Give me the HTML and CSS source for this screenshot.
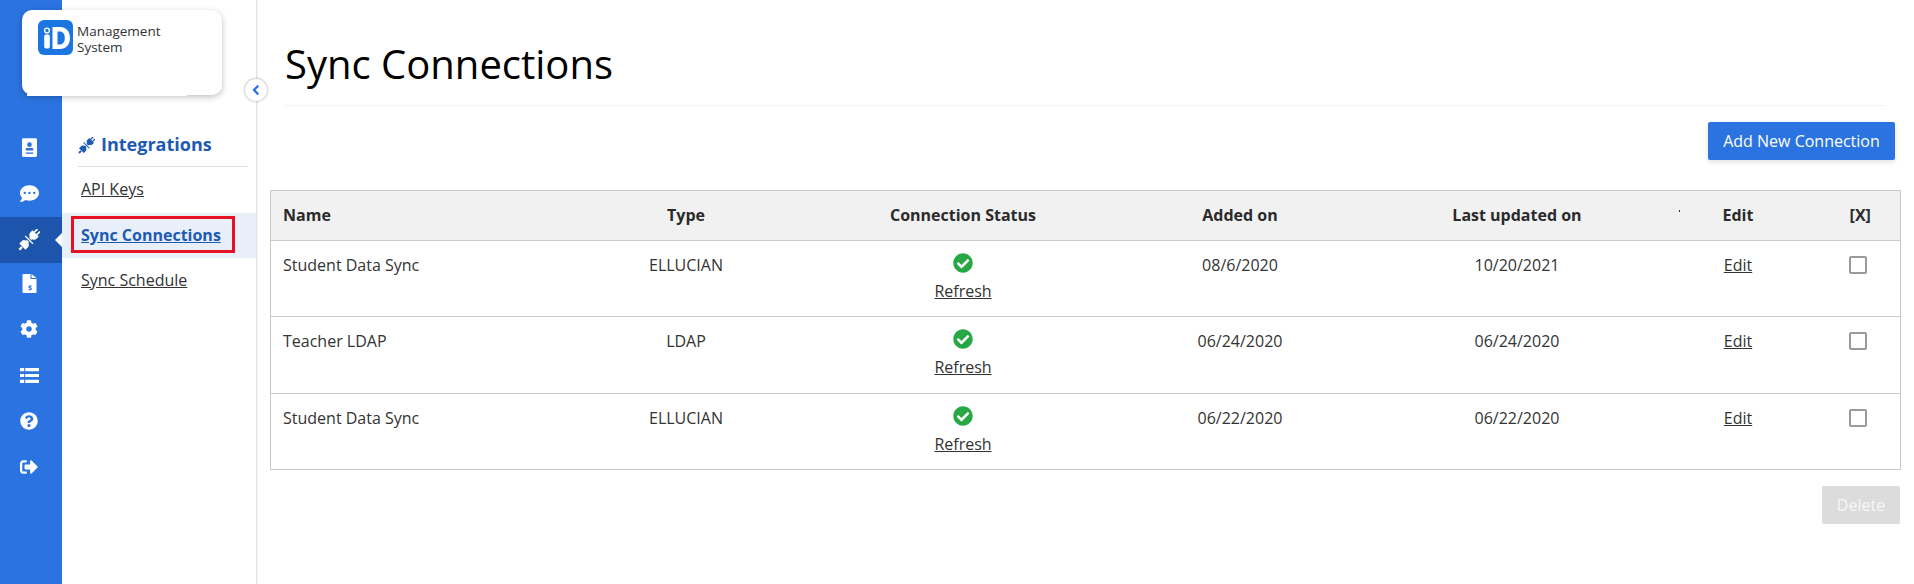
FILE: index.html
```html
<!DOCTYPE html>
<html lang="en">
<head>
<meta charset="utf-8">
<title>Sync Connections</title>
<link rel="stylesheet" href="styles.css">
</head>
<body>
<svg class="defs" width="0" height="0" aria-hidden="true">
  <symbol id="plug" viewBox="0 0 24 24">
    <g transform="rotate(45 12 12)" fill="currentColor">
      <rect x="9.200" y="-3" width="1.800" height="5"/>
      <rect x="13" y="-3" width="1.800" height="5"/>
      <path d="M7.200 1.800h9.600v3.400c0 1.900-1.100 3.200-2.900 3.600v1.400h-3.800V8.800C8.300 8.400 7.200 7.100 7.200 5.200z"/>
      <path d="M10.100 13.600h3.800V15c1.800.4 2.900 1.700 2.900 3.600v3.600H7.200v-3.600c0-1.900 1.100-3.200 2.900-3.600z"/>
      <rect x="6" y="11.200" width="12" height="1.400"/>
      <rect x="10.700" y="22.800" width="2.600" height="4.200"/>
    </g>
  </symbol>
  <symbol id="check" viewBox="0 0 512 512">
    <path fill="#28a745" d="M504 256c0 136.967-111.033 248-248 248S8 392.967 8 256 119.033 8 256 8s248 111.033 248 248zM227.314 387.314l184-184c6.248-6.248 6.248-16.379 0-22.627l-22.627-22.627c-6.248-6.249-16.379-6.249-22.628 0L216 308.118l-69.059-69.059c-6.248-6.248-16.379-6.248-22.628 0l-22.627 22.627c-6.248 6.248-6.248 16.379 0 22.627l104 104c6.249 6.249 16.379 6.249 22.628.001z"/>
  </symbol>
</svg>

<div class="app">
  <nav class="rail">
    <a class="rail-item">
      <svg class="rail-icon" viewBox="0 0 16 20"><path fill="#fff" fill-rule="evenodd" d="M1.500 0h13A1.500 1.500 0 0 1 16 1.500v17a1.500 1.500 0 0 1-1.500 1.500h-13A1.500 1.500 0 0 1 0 18.500v-17A1.500 1.500 0 0 1 1.500 0zM8 4.500a2.500 2.500 0 1 0 0 5 2.500 2.500 0 0 0 0-5zM4 11.600v1.700h8v-1.700c0-.6-.5-1-1.200-1H5.200c-.7 0-1.200.4-1.200 1z"/><rect x="4" y="15.300" width="8" height="1.400" fill="#2b73e0"/></svg>
    </a>
    <a class="rail-item item-tall">
      <svg class="rail-icon wide" viewBox="0 0 512 512"><path fill="#fff" d="M256 32C114.600 32 0 125.100 0 240c0 49.600 21.400 95 57 130.700C44.500 421.100 2.700 466 2.200 466.500c-2.200 2.300-2.800 5.700-1.500 8.700S4.800 480 8 480c66.300 0 116-31.800 140.600-51.400 32.700 12.300 69 19.400 107.400 19.400 141.400 0 256-93.100 256-208S397.400 32 256 32zM128 272c-17.700 0-32-14.300-32-32s14.300-32 32-32 32 14.300 32 32-14.300 32-32 32zm128 0c-17.700 0-32-14.300-32-32s14.300-32 32-32 32 14.300 32 32-14.300 32-32 32zm128 0c-17.700 0-32-14.300-32-32s14.300-32 32-32 32 14.300 32 32-14.300 32-32 32z"/></svg>
    </a>
    <a class="rail-item active">
      <svg class="rail-icon rail-plug"><use href="#plug"/></svg>
    </a>
    <a class="rail-item item-short">
      <svg class="rail-icon" viewBox="0 0 14 19"><path fill="#fff" d="M0 .8C0 .4.400 0 .800 0H8v5h6v13.200c0 .4-.4.800-.8.800H.8c-.4 0-.8-.4-.8-.8zM9 0l5 4H9z"/><text x="7.500" y="15.800" class="doc-dollar">$</text></svg>
    </a>
    <a class="rail-item">
      <svg class="rail-icon gear" viewBox="0 0 512 512"><path fill="#fff" d="M487.400 315.700l-42.600-24.600c4.300-23.200 4.300-47 0-70.200l42.600-24.600c4.900-2.800 7.100-8.600 5.500-14-11.100-35.600-30-67.800-54.700-94.600-3.800-4.100-10-5.100-14.800-2.300L380.800 110c-17.900-15.400-38.500-27.300-60.800-35.100V25.800c0-5.600-3.900-10.500-9.400-11.700-36.700-8.200-74.300-7.800-109.200 0-5.500 1.200-9.400 6.100-9.400 11.700V75c-22.200 7.900-42.800 19.800-60.800 35.100L88.700 85.500c-4.900-2.800-11-1.900-14.800 2.300-24.700 26.700-43.600 58.900-54.700 94.600-1.700 5.400.6 11.200 5.500 14L67.300 221c-4.300 23.200-4.300 47 0 70.200l-42.600 24.600c-4.900 2.800-7.100 8.600-5.500 14 11.100 35.600 30 67.800 54.700 94.600 3.800 4.100 10 5.100 14.800 2.300l42.600-24.600c17.900 15.400 38.500 27.300 60.800 35.100v49.200c0 5.600 3.900 10.500 9.400 11.700 36.700 8.200 74.300 7.800 109.200 0 5.500-1.200 9.400-6.100 9.400-11.700v-49.200c22.200-7.900 42.800-19.800 60.800-35.100l42.600 24.600c4.900 2.800 11 1.900 14.800-2.300 24.700-26.700 43.600-58.900 54.700-94.600 1.500-5.500-.7-11.300-5.600-14.100zM256 336c-44.100 0-80-35.900-80-80s35.900-80 80-80 80 35.900 80 80-35.900 80-80 80z"/></svg>
    </a>
    <a class="rail-item">
      <svg class="rail-icon list" viewBox="0 0 19 15"><path fill="#fff" d="M0 0h4.200v3.200H0zM5.200 0H19v3.200H5.200zM0 5.900h4.200v3.200H0zM5.200 5.900H19v3.200H5.200zM0 11.800h4.200V15H0zM5.200 11.800H19V15H5.200z"/></svg>
    </a>
    <a class="rail-item">
      <svg class="rail-icon gear" viewBox="0 0 512 512"><path fill="#fff" d="M504 256c0 136.997-111.043 248-248 248S8 392.997 8 256C8 119.083 119.043 8 256 8s248 111.083 248 248zM262.655 90c-54.497 0-89.255 22.957-116.549 63.758-3.536 5.286-2.353 12.415 2.715 16.258l34.699 26.310c5.205 3.947 12.621 3.008 16.665-2.122 17.864-22.658 30.113-35.797 57.303-35.797 20.429 0 45.698 13.148 45.698 32.958 0 14.976-12.363 22.667-32.534 33.976C247.128 238.528 216 254.941 216 296v4c0 6.627 5.373 12 12 12h56c6.627 0 12-5.373 12-12v-1.333c0-28.462 83.186-29.647 83.186-106.667 0-58.002-60.165-102-116.531-102zM256 338c-25.365 0-46 20.635-46 46 0 25.364 20.635 46 46 46s46-20.636 46-46c0-25.365-20.635-46-46-46z"/></svg>
    </a>
    <a class="rail-item item-short">
      <svg class="rail-icon gear" viewBox="0 0 512 512"><path fill="#fff" d="M497 273L329 441c-15 15-41 4.500-41-17v-96H152c-13.300 0-24-10.700-24-24v-96c0-13.300 10.700-24 24-24h136V88c0-21.400 25.900-32 41-17l168 168c9.300 9.400 9.300 24.600 0 34zM192 436v-40c0-6.600-5.400-12-12-12H96c-17.700 0-32-14.300-32-32V160c0-17.700 14.300-32 32-32h84c6.600 0 12-5.400 12-12V76c0-6.600-5.400-12-12-12H96c-53 0-96 43-96 96v192c0 53 43 96 96 96h84c6.600 0 12-5.400 12-12z"/></svg>
    </a>
  </nav>

  <div class="logo-card">
    <svg class="logo-mark" viewBox="0 0 35 35"><rect width="35" height="35" rx="6" fill="#1c76e2"/><circle cx="9" cy="10.500" r="2.400" fill="none" stroke="#fff" stroke-width="1.400"/><rect x="6.200" y="14.500" width="5.600" height="14" rx="1.800" fill="#fff"/><path fill="#fff" fill-rule="evenodd" d="M14.500 7h7.500c6 0 10 4.300 10 11s-4 11-10 11h-7.500zM19.500 11.500v13h2.300c3 0 5-2.500 5-6.500s-2-6.500-5-6.500z"/></svg>
    <span class="logo-text">Management<br>System</span>
  </div>
  <button class="collapse" type="button" aria-label="Collapse">
    <svg viewBox="0 0 10 14" width="8" height="12"><path d="M7.800 1.500 2.500 7l5.300 5.500" fill="none" stroke="#2b73e0" stroke-width="2.800"/></svg>
  </button>

  <aside class="panel">
    <h2 class="panel-title"><svg class="panel-icon"><use href="#plug"/></svg>Integrations</h2>
    <ul class="panel-list">
      <li><a href="#">API Keys</a></li>
      <li class="current"><a href="#">Sync Connections</a></li>
      <li><a href="#">Sync Schedule</a></li>
    </ul>
  </aside>

  <main class="main">
    <h1 class="title">Sync Connections</h1>
    <div class="actions"><button class="btn-add" type="button">Add New Connection</button></div>
    <table class="grid">
      <colgroup><col class="c-w"><col class="c-w"><col class="c-w"><col class="c-w"><col class="c-w"><col class="c-edit"><col class="c-x"></colgroup>
      <thead>
        <tr><th class="left">Name</th><th>Type</th><th>Connection Status</th><th>Added on</th><th class="has-dot">Last updated on<i class="dot"></i></th><th>Edit</th><th>[X]</th></tr>
      </thead>
      <tbody>
        <tr class="r1"><td class="left">Student Data Sync</td><td>ELLUCIAN</td><td><svg class="ok"><use href="#check"/></svg><a href="#">Refresh</a></td><td>08/6/2020</td><td>10/20/2021</td><td><a href="#">Edit</a></td><td><span class="box"></span></td></tr>
        <tr class="r2"><td class="left">Teacher LDAP</td><td>LDAP</td><td><svg class="ok"><use href="#check"/></svg><a href="#">Refresh</a></td><td>06/24/2020</td><td>06/24/2020</td><td><a href="#">Edit</a></td><td><span class="box"></span></td></tr>
        <tr class="r3"><td class="left">Student Data Sync</td><td>ELLUCIAN</td><td><svg class="ok"><use href="#check"/></svg><a href="#">Refresh</a></td><td>06/22/2020</td><td>06/22/2020</td><td><a href="#">Edit</a></td><td><span class="box"></span></td></tr>
      </tbody>
    </table>
    <div class="foot"><button class="btn-del" type="button">Delete</button></div>
  </main>
</div>
</body>
</html>
```
FILE: styles.css
```css
* { box-sizing: border-box; }
html, body { margin: 0; height: 100%; background: #fff; overflow: hidden; }
body { font-family: "Open Sans", "Noto Sans", sans-serif; font-size: 16px; color: #333; }
.defs { position: absolute; }
a { color: inherit; }

.app { display: flex; height: 584px; position: relative; }

.rail { width: 62px; flex: none; background: #2b73e0; padding-top: 124px; display: flex; flex-direction: column; }
.rail-item { height: 46px; flex: none; display: flex; align-items: center; justify-content: center; position: relative; }
.rail-item.item-tall { height: 47px; }
.rail-item.item-short { height: 45px; }
.rail-item.active { background: #1c55ab; margin-bottom: -2px; }
.rail-item.active::after { content: ""; position: absolute; right: 0; top: 50%; margin-top: -7px; border: 7px solid transparent; border-right-color: #fff; border-left-width: 0; }
.rail-icon { width: 15px; height: 19px; display: block; color: #fff; margin-left: -4px; }
.rail-icon.wide { width: 19px; height: 19px; }
.rail-icon.gear { width: 18px; height: 18px; }
.rail-icon.list { width: 19px; height: 15px; }
.rail-icon.rail-plug { width: 22px; height: 22px; margin-left: -5px; }
.doc-dollar { font: 700 7px "Open Sans", sans-serif; fill: #2b73e0; text-anchor: middle; }

.logo-card { position: absolute; left: 22px; top: 10px; width: 200px; height: 85px; background: #fff; border-radius: 10px; box-shadow: 0 2px 6px rgba(0,0,0,.25); display: flex; align-items: flex-start; padding: 10px 16px; gap: 4px; z-index: 2; }
.logo-card::after { content: ""; position: absolute; left: 5px; bottom: -1px; width: 160px; height: 2px; background: #fff; }
.logo-mark { width: 35px; height: 35px; flex: none; }
.logo-text { font-size: 13.500px; line-height: 16px; color: #333; padding-top: 3px; }

.collapse { position: absolute; left: 245px; top: 79px; width: 22px; height: 22px; border-radius: 50%; border: 0; padding: 0; background: #fff; box-shadow: 0 0 3px rgba(0,0,0,.4); display: flex; align-items: center; justify-content: center; z-index: 3; }

.panel { width: 195px; flex: none; border-right: 1px solid #e3e3e3; box-shadow: 1px 0 2px rgba(0,0,0,.05); padding-top: 131px; }
.panel-title { margin: 0 8px 0 16px; height: 36px; border-bottom: 1px solid #ddd; font-size: 18px; font-weight: 700; color: #1c5ab4; line-height: 27px; display: flex; align-items: flex-start; gap: 6px; }
.panel-icon { width: 17px; height: 17px; margin-top: 6px; color: #1c5ab4; }
.panel-list { list-style: none; margin: 0; padding: 1px 0 0; }
.panel-list li { height: 45px; padding: 0 0 0 19px; line-height: 44px; font-size: 16px; color: #333; position: relative; }
.panel-list li:first-child { line-height: 42px; }
.panel-list li.current { background: #e8eff9; color: #1c5ab4; font-weight: 700; }
.panel-list li.current::after { content: ""; position: absolute; left: 9px; top: 3px; width: 158px; height: 31px; border: 3px solid #e81123; pointer-events: none; }

.main { flex: 1; min-width: 0; padding: 0 14px 0 13px; }
.title { margin: 0 0 0 15px; padding: 37px 0 10px; height: 106px; font-size: 40px; font-weight: 400; line-height: 54px; color: #000; border-bottom: 1px solid #f2f2f2; width: 1601px; }
.actions { display: flex; justify-content: flex-end; padding: 16px 5px 30px 0; }
.btn-add { height: 38px; width: 187px; border: 0; border-radius: 2px; background: #2b73e0; color: #fff; font: 400 16px "Open Sans", sans-serif; box-shadow: 0 2px 5px rgba(0,0,0,.12); padding: 0; }

.grid { width: 1630px; table-layout: fixed; border-collapse: collapse; border: 1px solid #c9c9c9; font-size: 16px; }
.c-w { width: 277px; }
.c-edit { width: 165px; }
.c-x { width: 80px; }
.grid th, .grid td { text-align: center; padding: 0; font-weight: 400; border-bottom: 1px solid #c9c9c9; vertical-align: top; }
.grid th { background: #f1f1f1; height: 50px; font-weight: 700; color: #2b2b2b; line-height: 48px; }
.grid td { padding-top: 12px; line-height: 24px; }
.grid .left { text-align: left; padding-left: 12px; }
.r1 td, .r3 td { height: 76px; }
.r2 td { height: 77px; }
.has-dot { position: relative; }
.dot { position: absolute; left: 300px; top: 19px; width: 1px; height: 2px; background: #333; }
.ok { display: block; width: 20px; height: 20px; margin: 0 auto 6px; }
.box { display: block; width: 18px; height: 18px; margin: 3px auto 0; transform: translateX(-2px); border: 2px solid #9a9a9a; border-radius: 2px; background: #fff; }

.foot { display: flex; justify-content: flex-end; padding-top: 16px; }
.btn-del { width: 78px; height: 38px; border: 0; border-radius: 2px; background: #dcdcdc; color: #f7f7f7; font: 400 16px "Open Sans", sans-serif; padding: 0; }
```
